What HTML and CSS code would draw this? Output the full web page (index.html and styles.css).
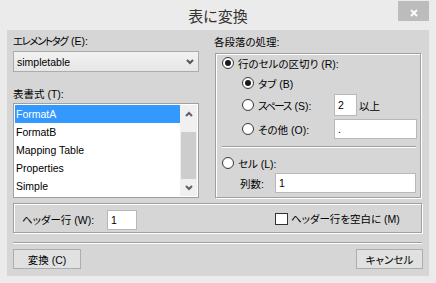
FILE: index.html
```html
<!DOCTYPE html>
<html lang="ja">
<head>
<meta charset="utf-8">
<link rel="stylesheet" href="styles.css">
</head>
<body>
<div class="window">
  <div class="titlebar">
    <div></div>
    <div class="title">表に変換</div>
    <div class="close">
      <svg width="8" height="8" viewBox="0 0 8 8"><path d="M1 1L7 7M7 1L1 7" stroke="#fff" stroke-width="1.8" fill="none"/></svg>
    </div>
  </div>
  <div class="client">
    <div class="top">
      <div class="left">
        <div class="label l1"><span class="kn">エレメントタグ</span> (E):</div>
        <div class="select">
          <span>simpletable</span>
          <svg class="chev" width="8" height="6" viewBox="0 0 8 6"><path d="M1 1L4 4L7 1" stroke="#555" stroke-width="2" fill="none"/></svg>
        </div>
        <div class="label l2">表書式 (T):</div>
        <div class="list">
          <div class="items">
            <div class="item sel">FormatA</div>
            <div class="item">FormatB</div>
            <div class="item">Mapping Table</div>
            <div class="item">Properties</div>
            <div class="item">Simple</div>
          </div>
          <div class="scrollbar">
            <div class="sb-btn"><svg width="8" height="6" viewBox="0 0 8 6"><path d="M1 5L4 2L7 5" stroke="#606060" stroke-width="2" fill="none"/></svg></div>
            <div class="sb-track"><div class="sb-thumb"></div></div>
            <div class="sb-btn"><svg width="8" height="6" viewBox="0 0 8 6"><path d="M1 1L4 4L7 1" stroke="#606060" stroke-width="2" fill="none"/></svg></div>
          </div>
        </div>
      </div>
      <div class="right">
        <div class="label r1">各段落の処理:</div>
        <div class="group">
          <div class="row row1"><span class="radio on"></span><span>行のセルの区切り (R):</span></div>
          <div class="row row2 sub"><span class="radio on"></span><span>タブ (B)</span></div>
          <div class="row row3 sub">
            <div class="opt"><span class="radio"></span><span><span class="kn">スペース</span> (S):</span></div>
            <div class="input small">2</div>
            <span class="after">以上</span>
          </div>
          <div class="row row4 sub">
            <div class="opt"><span class="radio"></span><span>その他 (O):</span></div>
            <div class="input wide">.</div>
          </div>
          <div class="gsep"></div>
          <div class="row row5"><span class="radio"></span><span>セル (L):</span></div>
          <div class="row row6">
            <span class="cols-label">列数:</span>
            <div class="input cols">1</div>
          </div>
        </div>
      </div>
    </div>
    <div class="header-box">
      <span class="hlabel">ヘッダー行 (W):</span>
      <div class="input hinput">1</div>
      <span class="check"></span>
      <span class="clabel">ヘッダー行を空白に (M)</span>
    </div>
    <div class="sep"></div>
    <div class="buttons">
      <div class="btn b1">変換 (C)</div>
      <div class="btn b2">キャンセル</div>
    </div>
  </div>
</div>
</body>
</html>
```
FILE: styles.css
```css
* { box-sizing: border-box; }
html, body { margin: 0; padding: 0; }
body {
  font-family: "Liberation Sans", "Noto Sans CJK JP", sans-serif;
  font-size: 10.5px;
  font-feature-settings: "palt";
  color: #000;
  background: #ebebeb;
}
.window {
  width: 436px;
  height: 283px;
  background: #ebebeb;
  overflow: hidden;
}
.titlebar {
  height: 30px;
  display: grid;
  grid-template-columns: 1fr auto 1fr;
}
.title {
  font-family: "Noto Sans CJK JP", sans-serif;
  font-size: 15px;
  line-height: 30px;
  color: #333;
  padding-top: 1px;
}
.close {
  justify-self: end;
  align-self: start;
  margin: 1px 7px 0 0;
  width: 31px;
  height: 20px;
  background: #bcbcbc;
  display: flex;
  align-items: center;
  justify-content: center;
  padding-top: 3px;
}
.client {
  margin: 0 7px;
  height: 246px;
  background: #d6d6d6;
  padding: 4px 7px 0 6px;
}
.label { height: 14px; line-height: 14px; white-space: nowrap; }
.kn { letter-spacing: -1.5px; margin-right: 1px; }
.top { display: flex; }
.left { width: 186px; }
.right { width: 208px; margin-left: 15px; }
.select {
  margin-top: 3px;
  height: 21px;
  border: 1px solid #acacac;
  background: linear-gradient(#f2f2f2, #e6e6e6);
  display: flex;
  align-items: center;
  justify-content: space-between;
  padding: 0 4px 0 3px;
}
.chev { margin-top: 1px; }
.l2 { margin-top: 15px; }
.list {
  margin-top: 2px;
  height: 95px;
  border: 1px solid #a0a0a0;
  background: #fff;
  padding: 1px;
  display: flex;
}
.items { flex: 1; }
.item { height: 18px; line-height: 18px; padding-left: 1px; white-space: nowrap; }
.item.sel { background: #3399ff; color: #fff; }
.scrollbar {
  width: 17px;
  background: #f0f0f0;
  display: flex;
  flex-direction: column;
}
.sb-btn { height: 17px; display: flex; align-items: center; justify-content: center; }
.sb-track { flex: 1; padding: 10px 1px 0 1px; }
.sb-thumb { height: 47px; background: #cdcdcd; }
.r1 { margin-top: 1px; }
.group {
  margin-top: 4px;
  margin-left: 1px;
  width: 206px;
  height: 145px;
  border: 1px solid #a0a0a0;
  box-shadow: inset 1px 1px 0 #fff, 1px 1px 0 #fff;
  padding-left: 6px;
}
.row { display: flex; align-items: center; white-space: nowrap; }
.row1 { height: 18px; }
.row2 { height: 18px; margin-top: 2px; }
.row3 { height: 22px; margin-top: 2px; }
.row4 { height: 20px; margin-top: 3px; }
.row5 { height: 18px; margin-top: 6px; }
.row6 { height: 20px; margin-top: 1px; padding-left: 18px; }
.sub { padding-left: 20px; }
.opt { width: 92px; display: flex; align-items: center; }
.radio {
  width: 12px;
  height: 12px;
  border-radius: 50%;
  border: 1px solid #3c3c3c;
  background: radial-gradient(#ffffff 55%, #e8e8e8);
  margin-right: 4px;
  flex: none;
  display: flex;
  align-items: center;
  justify-content: center;
}
.radio.on::after {
  content: "";
  width: 6px;
  height: 6px;
  border-radius: 50%;
  background: #1a1a1a;
}
.input {
  background: #fff;
  border: 1px solid #b8b8b8;
  padding-left: 3px;
  display: flex;
  align-items: center;
  color: #000;
}
.small { width: 23px; height: 22px; }
.wide { width: 83px; height: 20px; }
.after { margin-left: 2px; }
.gsep {
  margin-top: 7px;
  width: 194px;
  height: 2px;
  border-top: 1px solid #a0a0a0;
  border-bottom: 1px solid #fff;
}
.cols-label { width: 35px; }
.cols { width: 141px; height: 20px; }
.header-box {
  margin-top: 5px;
  height: 30px;
  border: 1px solid #a0a0a0;
  box-shadow: inset 1px 1px 0 #fff, 1px 1px 0 #fff;
  display: flex;
  align-items: flex-start;
  padding: 6px 0 0 8px;
  white-space: nowrap;
}
.hlabel { width: 85px; line-height: 20px; }
.hinput { width: 30px; height: 20px; }
.check {
  margin: 3px 0 0 138px;
  width: 13px;
  height: 12px;
  border: 1px solid #333;
  background: #fff;
}
.clabel { margin-left: 3px; line-height: 18px; }
.sep {
  margin-top: 9px;
  height: 2px;
  border-top: 1px solid #a0a0a0;
  border-bottom: 1px solid #fff;
}
.buttons {
  margin-top: 5px;
  display: flex;
  justify-content: space-between;
  margin-right: -1px;
}
.btn {
  height: 20px;
  border: 1px solid #adadad;
  background: #e1e1e1;
  display: flex;
  align-items: center;
  justify-content: center;
  white-space: nowrap;
}
.b1 { width: 68px; }
.b2 { width: 67px; }
```
